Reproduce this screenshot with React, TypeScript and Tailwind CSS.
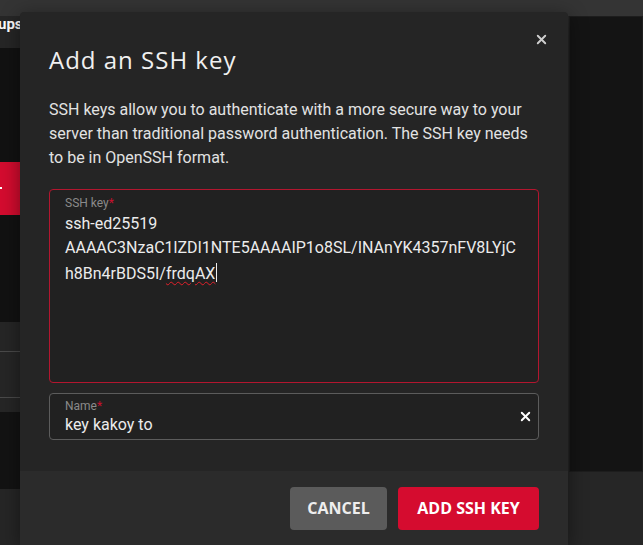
import { X } from "lucide-react";

const roboto = { fontFamily: "Roboto, 'Liberation Sans', sans-serif" };
const display = { fontFamily: "'Open Sans', Lato, sans-serif" };

function Backdrop() {
  return (
    <div className="flex h-full w-full flex-col bg-[#262626]">
      <div className="h-[16px] shrink-0 bg-[#343434]" />
      <div className="flex flex-1">
        <div className="flex w-[20px] shrink-0 flex-col overflow-hidden">
          <div className="h-[32px] whitespace-nowrap text-[15px] font-bold leading-[16px] text-white" style={roboto}>
            <span className="-ml-[2px] block">ups</span>
          </div>
          <div className="flex h-[274px] flex-col bg-[#121212]">
            <div className="h-[114px]" />
            <div className="relative h-[53px] bg-[#d50c2f]">
              <div className="absolute left-0 top-[25px] h-[2px] w-[2px] bg-white" />
            </div>
          </div>
          <div className="h-[29px]" />
          <div className="h-[47px] border-y border-[#4a4a4a]" />
          <div className="h-[14px]" />
          <div className="h-[77px] bg-[#131313]" />
        </div>
        <div className="w-[549px] shrink-0" />
        <div className="flex flex-1 flex-col">
          <div className="h-[456px] border border-[#1d1d1d] bg-[#141414]" />
        </div>
      </div>
    </div>
  );
}

function SshDialog() {
  return (
    <div className="absolute left-[20px] top-[12px] flex h-[533px] w-[548px] flex-col overflow-hidden rounded-t-[4px] bg-[#252525] shadow-[0_4px_20px_rgba(0,0,0,0.45)]">
      <div className="flex-1 px-[29px] pt-[29px]">
        <div className="flex items-start justify-between">
          <h2 className="text-[24px] leading-[38px] font-normal tracking-[1px] text-[#f0f0f0]" style={display}>
            Add an SSH key
          </h2>
          <button className="-mr-[10px] mt-[-9px] text-[#cfcfcf]" type="button">
            <X className="h-[15px] w-[15px]" strokeWidth={3} />
          </button>
        </div>

        <p className="mt-[19px] text-[16px] leading-[24px] text-[#e2e2e2]" style={roboto}>
          SSH keys allow you to authenticate with a more secure way to your server than traditional password
          authentication. The SSH key needs to be in OpenSSH format.
        </p>

        <div className="mt-[19px] h-[194px] rounded-[4px] border border-[#b3162f] bg-[#212121] px-[15px] pt-[5px]" style={roboto}>
          <p className="text-[12px] leading-[16px] text-[#8a8a8a]">
            SSH key<span className="text-[#c8102e]">*</span>
          </p>
          <div className="mt-[1px] text-[16px] leading-[24px] text-[#ececec]">
            <p>ssh-ed25519</p>
            <p>AAAAC3NzaC1lZDI1NTE5AAAAIP1o8SL/INAnYK4357nFV8LYjC</p>
            <p>
              h8Bn4rBDS5I/
              <span className="underline decoration-wavy decoration-[#e0202a] decoration-1 underline-offset-2">frdqAX</span>
              <span className="ml-[1px] inline-block h-[19px] w-px translate-y-[3px] bg-[#eeeeee]" />
            </p>
          </div>
        </div>

        <div className="mt-[10px] flex h-[47px] items-center rounded-[4px] border border-[#5c5c5c] bg-[#212121] pl-[15px] pr-[5px]" style={roboto}>
          <div className="flex-1">
            <p className="text-[12px] leading-[14px] text-[#8a8a8a]">
              Name<span className="text-[#c8102e]">*</span>
            </p>
            <p className="mt-[2px] text-[16px] leading-[20px] text-[#ececec]">key kakoy to</p>
          </div>
          <X className="h-[15px] w-[15px] text-white" strokeWidth={3} />
        </div>
      </div>

      <div className="flex h-[74px] shrink-0 items-center justify-end gap-[11px] bg-[#2b2b2b] pr-[29px]">
        <button
          className="h-[43px] w-[97px] rounded-[4px] bg-[#5b5b5b] text-[16px] font-bold text-[#eeeeee]"
          style={display}
          type="button"
        >
          CANCEL
        </button>
        <button
          className="h-[43px] w-[141px] rounded-[4px] bg-[#d50c2f] text-[16px] font-bold text-white"
          style={display}
          type="button"
        >
          ADD SSH KEY
        </button>
      </div>
    </div>
  );
}

export default function App() {
  return (
    <div className="relative h-[545px] w-[643px] overflow-hidden">
      <Backdrop />
      <SshDialog />
    </div>
  );
}
